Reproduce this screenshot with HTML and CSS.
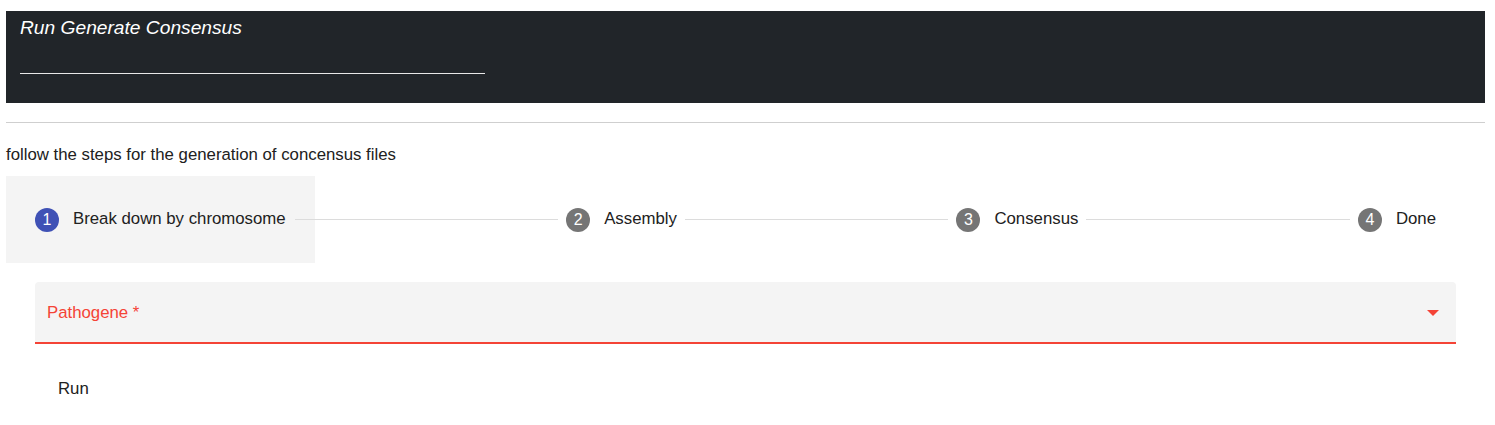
FILE: index.html
```html
<!DOCTYPE html>
<html>
<head>
<meta charset="utf-8">
<link rel="stylesheet" href="styles.css">
</head>
<body>
<div class="page">
  <header class="banner">
    <h1 class="banner-title">Run Generate Consensus</h1>
    <div class="banner-rule"></div>
  </header>
  <div class="divider"></div>
  <p class="intro">follow the steps for the generation of concensus files</p>
  <div class="stepper">
    <div class="step step-active">
      <span class="step-icon step-icon-active">1</span>
      <span class="step-label">Break down by chromosome</span>
    </div>
    <div class="connector connector-first"></div>
    <div class="step">
      <span class="step-icon">2</span>
      <span class="step-label">Assembly</span>
    </div>
    <div class="connector"></div>
    <div class="step">
      <span class="step-icon">3</span>
      <span class="step-label">Consensus</span>
    </div>
    <div class="connector"></div>
    <div class="step">
      <span class="step-icon">4</span>
      <span class="step-label">Done</span>
    </div>
  </div>
  <div class="form">
    <div class="select-field">
      <span class="select-label">Pathogene *</span>
      <svg class="select-arrow" width="12" height="6" viewBox="0 0 12 6"><path d="M0 0 L12 0 L6 6 Z" fill="#f44336"/></svg>
    </div>
    <button class="run-btn" type="button">Run</button>
  </div>
</div>
</body>
</html>
```

FILE: styles.css
```css
* { box-sizing: border-box; }
html, body { margin: 0; padding: 0; background: #fff; }
body {
  font-family: "Liberation Sans", Arial, sans-serif;
  color: #212121;
}
.page {
  padding: 11px 10px 0 6px;
}
.banner {
  background: #212529;
  height: 92px;
  padding: 6px 14px 0 14px;
}
.banner-title {
  margin: 0;
  font-size: 19.2px;
  line-height: 22px;
  font-style: italic;
  font-weight: normal;
  color: #fff;
}
.banner-rule {
  margin-top: 34px;
  width: 465px;
  height: 1px;
  background: #e8e8e8;
}
.divider {
  margin-top: 19px;
  height: 1px;
  background: #cfcfcf;
}
.intro {
  margin: 22px 0 0 0;
  font-size: 16.8px;
  line-height: 20px;
  color: #212121;
}
.stepper {
  margin-top: 11px;
  height: 87px;
  display: flex;
  align-items: center;
  padding-right: 41px;
}
.step {
  display: flex;
  align-items: center;
  padding: 0 8px;
}
.step-active {
  align-self: stretch;
  background: #f4f4f4;
  padding: 0 29px;
}
.step-icon {
  width: 24px;
  height: 24px;
  border-radius: 50%;
  background: #757575;
  color: #fff;
  font-size: 16px;
  line-height: 24px;
  text-align: center;
  flex: none;
}
.step-icon-active { background: #3f51b5; }
.step-label {
  margin-left: 14px;
  font-size: 16.8px;
  line-height: 20px;
  color: #212121;
  white-space: nowrap;
  position: relative;
  top: -1px;
}
.connector {
  flex: 1;
  height: 1px;
  background: #dcdcdc;
}
.connector-first {
  margin-left: -20px;
  position: relative;
  z-index: 1;
}
.form {
  padding: 19px 29px 0 29px;
}
.select-field {
  height: 62px;
  background: #f4f4f4;
  border-radius: 4px 4px 0 0;
  border-bottom: 2px solid #f44336;
  display: flex;
  align-items: center;
  justify-content: space-between;
  padding: 1px 17px 0 12px;
}
.select-label {
  font-size: 16.8px;
  line-height: 20px;
  color: #f44336;
}
.select-arrow { display: block; }
.run-btn {
  margin: 27px 0 0 15px;
  background: transparent;
  border: none;
  padding: 6px 8px;
  font-family: "Liberation Sans", Arial, sans-serif;
  font-size: 16.8px;
  line-height: 24px;
  color: #212121;
  cursor: pointer;
}
```
